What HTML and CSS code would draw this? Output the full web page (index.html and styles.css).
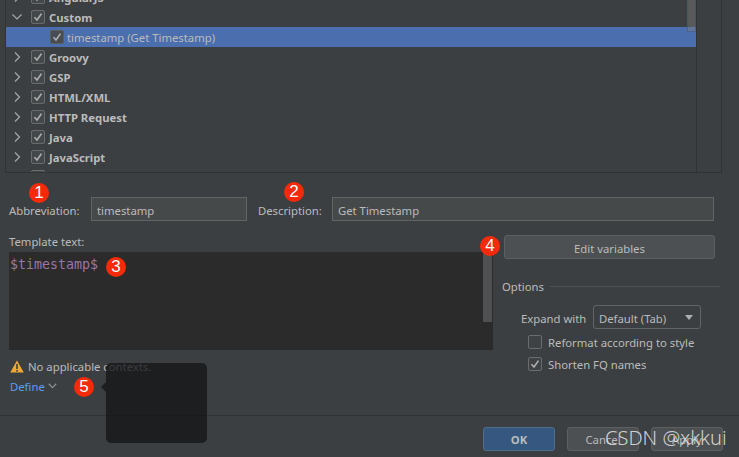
FILE: index.html
```html
<!DOCTYPE html>
<html lang="en">
<head>
<meta charset="utf-8">
<title>Live Templates</title>
<link rel="stylesheet" href="styles.css">
</head>
<body>
<svg class="defs" width="0" height="0">
  <symbol id="chk" viewBox="0 0 14 14"><path d="M3.5 7.2 6 10 10.5 3.6" fill="none" stroke="currentColor" stroke-width="1.6"/></symbol>
  <symbol id="right" viewBox="0 0 8 12"><path d="M2 1.5 6.5 6 2 10.5" fill="none" stroke="currentColor" stroke-width="1.2"/></symbol>
  <symbol id="down" viewBox="0 0 12 8"><path d="M1.5 1.5 6 6 10.5 1.5" fill="none" stroke="currentColor" stroke-width="1.2"/></symbol>
  <symbol id="down-bold" viewBox="0 0 9 6"><path d="M.8 .8 4.5 4.6 8.2 .8" fill="none" stroke="currentColor" stroke-width="1.3"/></symbol>
</svg>
<div class="dialog">
  <section class="tree-panel">
    <div class="tree-list">
      <div class="row"><svg class="chev"><use href="#right"/></svg><span class="cb"><svg><use href="#chk"/></svg></span><b>AngularJS</b></div>
      <div class="row"><svg class="chev-d"><use href="#down"/></svg><span class="cb"><svg><use href="#chk"/></svg></span><b>Custom</b></div>
      <div class="row sel"><span class="cb"><svg><use href="#chk"/></svg></span><span class="child">timestamp (Get Timestamp)</span></div>
      <div class="row"><svg class="chev"><use href="#right"/></svg><span class="cb"><svg><use href="#chk"/></svg></span><b>Groovy</b></div>
      <div class="row"><svg class="chev"><use href="#right"/></svg><span class="cb"><svg><use href="#chk"/></svg></span><b>GSP</b></div>
      <div class="row"><svg class="chev"><use href="#right"/></svg><span class="cb"><svg><use href="#chk"/></svg></span><b>HTML/XML</b></div>
      <div class="row"><svg class="chev"><use href="#right"/></svg><span class="cb"><svg><use href="#chk"/></svg></span><b>HTTP Request</b></div>
      <div class="row"><svg class="chev"><use href="#right"/></svg><span class="cb"><svg><use href="#chk"/></svg></span><b>Java</b></div>
      <div class="row"><svg class="chev"><use href="#right"/></svg><span class="cb"><svg><use href="#chk"/></svg></span><b>JavaScript</b></div>
      <div class="row"><svg class="chev"><use href="#right"/></svg><span class="cb"></span><b>JSP</b></div>
      <div class="tree-thumb"></div>
    </div>
    <div class="side"></div>
  </section>

  <section class="fields">
    <label class="lbl-abbr">Abbreviation:</label>
    <div class="input abbr">timestamp</div>
    <label class="lbl-desc">Description:</label>
    <div class="input desc">Get Timestamp</div>
  </section>

  <section class="main">
    <div class="left">
      <div class="tt-label">Template text:</div>
      <div class="editor">
        <code>$timestamp$</code>
        <div class="ed-thumb"></div>
      </div>
      <div class="warn">
        <svg class="warn-ic" viewBox="0 0 14 13"><path d="M7 0.5 13.8 12.5H0.2Z" fill="#f0a732"/><rect x="6.2" y="4" width="1.6" height="5" fill="#3c3f41"/><rect x="6.2" y="10" width="1.6" height="1.6" fill="#3c3f41"/></svg>
        <span>No applicable contexts.</span>
      </div>
      <div class="define"><span>Define</span><svg class="chev-def"><use href="#down-bold"/></svg></div>
    </div>
    <div class="right">
      <div class="btn edit">Edit variables</div>
      <div class="opt-title"><span>Options</span><i></i></div>
      <div class="expand"><span>Expand with</span><div class="select"><span>Default (Tab)</span><i class="tri"></i></div></div>
      <div class="opt"><span class="cb plain"></span><span class="opt-text">Reformat according to style</span></div>
      <div class="opt second"><span class="cb plain"><svg><use href="#chk"/></svg></span><span class="opt-text">Shorten FQ names</span></div>
    </div>
  </section>

  <footer class="foot">
    <div class="btn primary">OK</div>
    <div class="btn">Cancel</div>
    <div class="btn">Apply</div>
  </footer>

  <div class="tip"><i></i></div>
  <div class="dot d1">1</div>
  <div class="dot d2">2</div>
  <div class="dot d3">3</div>
  <div class="dot d4">4</div>
  <div class="dot d5">5</div>
  <div class="mark">CSDN @xkkui</div>
</div>
</body>
</html>
```
FILE: styles.css
```css
* { box-sizing: border-box; }
html, body { margin: 0; padding: 0; }
body {
  width: 739px; height: 457px; overflow: hidden;
  background: #3c3f41; color: #bbbbbb;
  font: 11.3px/16px "Noto Sans", "Open Sans", sans-serif;
}
.defs { position: absolute; }
.dialog { position: relative; width: 739px; height: 457px; display: flex; flex-direction: column; }

.tree-panel {
  display: flex; height: 174px; width: 717px; margin-left: 5px;
  border-left: 1px solid #323232; border-right: 1px solid #323232; border-bottom: 1px solid #323232;
  overflow: hidden;
}
.tree-list { position: relative; width: 691px; margin-top: -13px; border-right: 1px solid #323232; flex: none; }
.side { flex: 1; }
.row { display: flex; align-items: center; height: 20px; white-space: nowrap; }
.row b { font-weight: 700; margin-left: 4px; padding-top: 1px; }
.row.sel { background: #4b6eaf; padding-left: 44px; }
.child { margin-left: 3px; padding-top: 1px; }
.chev { width: 8px; height: 12px; margin-left: 7px; margin-right: 10px; color: #a8a8a8; flex: none; }
.chev-d { width: 12px; height: 8px; margin-left: 5px; margin-right: 8px; color: #a8a8a8; flex: none; }
.cb {
  display: block; width: 14px; height: 14px; flex: none;
  border: 1px solid #6b6b6b; border-radius: 2px; background: #43494a; color: #b0b0b0;
}
.cb svg { display: block; width: 14px; height: 14px; margin: -1px; }
.sel .cb { background: #4a4d4f; border-color: #5a5d5f; }
.tree-thumb { position: absolute; right: 0; top: 0; width: 9px; height: 45px; background: rgba(130,130,130,.4); border: 1px solid rgba(60,80,120,.5); border-top: 0; }

.fields { display: flex; align-items: center; height: 24px; margin-top: 24px; padding-left: 9px; }
.lbl-abbr { width: 82px; padding-top: 4px; }
.lbl-desc { width: 74px; margin-left: 11px; padding-top: 4px; }
.input { height: 24px; line-height: 22px; padding: 2px 0 0 5px; background: #45494a; border: 1px solid #646464; }
.abbr { width: 156px; }
.desc { width: 382px; }

.main { display: flex; height: 178px; margin-top: 14px; padding-left: 9px; }
.left { width: 484px; flex: none; }
.tt-label { height: 17px; line-height: 13px; }
.editor { display: flex; justify-content: space-between; height: 98px; background: #2b2b2b; }
.editor code { font: 13.3px/26px "DejaVu Sans Mono", monospace; color: #9876aa; padding-left: 1px; }
.ed-thumb { width: 9px; height: 70px; margin-right: 1px; background: #4e5052; }
.warn { display: flex; align-items: center; gap: 4px; height: 16px; margin-top: 8px; }
.warn span { padding-top: 2px; }
.warn-ic { width: 14px; height: 13px; flex: none; margin-left: 1px; }
.define { display: flex; align-items: center; gap: 3px; height: 16px; margin-top: 4px; margin-left: 1px; color: #589df6; }
.define span { padding-top: 2px; }
.chev-def { width: 9px; height: 6px; color: #8b8f92; }

.right { margin-left: 9px; width: 218px; position: relative; }
.btn {
  display: flex; align-items: center; justify-content: center;
  width: 72px; height: 24px; padding-top: 2px; background: #4c5052; border: 1px solid #5e6060; border-radius: 3px;
}
.btn.edit { width: 211px; margin-left: 2px; padding-top: 4px; }
.opt-title { display: flex; align-items: center; gap: 6px; height: 16px; margin-top: 19px; }
.opt-title span { padding-top: 2px; }
.opt-title i { flex: 1; height: 1px; background: #515151; }
.expand { display: flex; align-items: center; height: 24px; margin-top: 11px; padding-left: 19px; }
.expand > span { width: 72px; padding-top: 3px; }
.select { display: flex; align-items: center; justify-content: space-between; width: 108px; height: 24px; padding: 3px 7px 0 5px; background: #3c3f41; border: 1px solid #646464; border-radius: 3px; }
.tri { width: 0; height: 0; margin-top: -3px; border-left: 4.5px solid transparent; border-right: 4.5px solid transparent; border-top: 5px solid #aeb0b2; }
.opt { display: flex; align-items: center; gap: 6px; height: 14px; margin-top: 6px; padding-left: 26px; }
.opt-text { padding-top: 2px; }
.opt.second { margin-top: 8px; }
.cb.plain { background: #3f4244; }

.foot { display: flex; gap: 12px; justify-content: flex-end; height: 42px; padding: 11px 16px 0 0; border-top: 1px solid #323232; margin-top: 3px; }
.btn.primary { background: #365880; border-color: #4c708c; color: #bbbbbb; font-weight: 700; }

.tip { position: absolute; left: 106px; top: 363px; width: 101px; height: 80px; background: rgba(18,20,22,.76); border-radius: 5px; }
.tip i { position: absolute; left: -5px; top: 19px; width: 0; height: 0; border-top: 5px solid transparent; border-bottom: 5px solid transparent; border-right: 5px solid rgba(18,20,22,.76); }
.dot { position: absolute; width: 20px; height: 20px; border-radius: 50%; background: #f62a08; color: #fff; text-align: center; font: 17px/20px "Liberation Sans", sans-serif; }
.d1 { left: 29px; top: 183px; }
.d2 { left: 284px; top: 182px; }
.d3 { left: 106px; top: 257px; }
.d4 { left: 480px; top: 236px; }
.d5 { left: 74px; top: 377px; }
.mark { position: absolute; left: 605px; top: 424px; font: 300 20px/28px "Noto Sans", sans-serif; color: rgba(225,225,225,.9); white-space: nowrap; }
```
